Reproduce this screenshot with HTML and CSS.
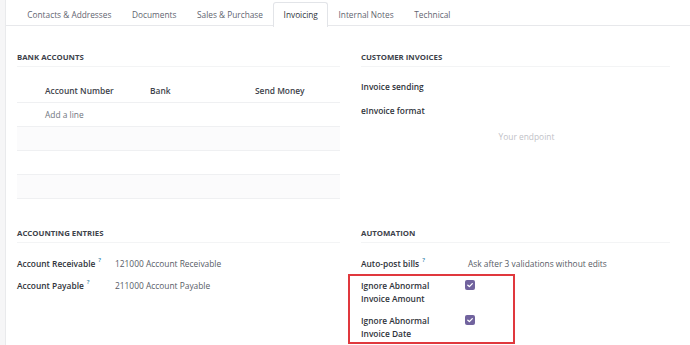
FILE: index.html
```html
<!DOCTYPE html>
<html lang="en">
<head>
  <meta charset="UTF-8">
  <meta name="viewport" content="width=device-width, initial-scale=1.0">
  <title>Partner - Invoicing</title>
  <link rel="stylesheet" href="styles.css">
</head>
<body>

<div class="page">
  <div class="rail"></div>

  <div class="sheet">
    <ul class="tabs">
      <li class="tab">Contacts &amp; Addresses</li>
      <li class="tab">Documents</li>
      <li class="tab">Sales &amp; Purchase</li>
      <li class="tab active">Invoicing</li>
      <li class="tab">Internal Notes</li>
      <li class="tab">Technical</li>
    </ul>

    <div class="groups">
      <!-- bank accounts -->
      <div class="group">
        <div class="group-title">Bank Accounts</div>
        <table class="lines">
          <thead>
            <tr>
              <th class="col-number">Account Number</th>
              <th class="col-bank">Bank</th>
              <th>Send Money</th>
            </tr>
          </thead>
          <tbody>
            <tr><td class="add-line" colspan="3">Add a line</td></tr>
            <tr class="stripe"><td colspan="3"></td></tr>
            <tr><td colspan="3"></td></tr>
            <tr class="stripe"><td colspan="3"></td></tr>
          </tbody>
        </table>
      </div>

      <!-- customer invoices -->
      <div class="group">
        <div class="group-title">Customer Invoices</div>
        <div class="field-row wide first">
          <div class="label">Invoice sending</div>
        </div>
        <div class="field-row wide">
          <div class="label">eInvoice format</div>
        </div>
        <div class="endpoint">Your endpoint</div>
      </div>

      <!-- accounting entries -->
      <div class="group second">
        <div class="group-title">Accounting Entries</div>
        <div class="field-row">
          <div class="label left-label">Account Receivable<sup>?</sup></div>
          <div class="value">121000 Account Receivable</div>
        </div>
        <div class="field-row">
          <div class="label left-label">Account Payable<sup>?</sup></div>
          <div class="value">211000 Account Payable</div>
        </div>
      </div>

      <!-- automation -->
      <div class="group second">
        <div class="group-title">Automation</div>
        <div class="field-row">
          <div class="label right-label">Auto-post bills<sup>?</sup></div>
          <div class="value">Ask after 3 validations without edits</div>
        </div>
        <div class="highlight">
          <div class="field-row">
            <div class="label right-label">Ignore Abnormal<br>Invoice Amount</div>
            <div class="value"><span class="checkbox"><svg viewBox="0 0 10 10" width="10" height="10"><path d="M2.8 5.2 L4.4 6.6 L7.3 3.6" fill="none" stroke="#fff" stroke-width="1.3" stroke-linecap="round" stroke-linejoin="round"/></svg></span></div>
          </div>
          <div class="field-row">
            <div class="label right-label">Ignore Abnormal<br>Invoice Date</div>
            <div class="value"><span class="checkbox"><svg viewBox="0 0 10 10" width="10" height="10"><path d="M2.8 5.2 L4.4 6.6 L7.3 3.6" fill="none" stroke="#fff" stroke-width="1.3" stroke-linecap="round" stroke-linejoin="round"/></svg></span></div>
          </div>
        </div>
      </div>
    </div>
  </div>
</div>

</body>
</html>
```

FILE: styles.css
```css
body {
  margin: 0;
  font-family: "Open Sans", "Noto Sans", sans-serif;
  font-size: 8.4px;
  color: #4a4f59;
  background-color: #fff;
}
.page {
  display: flex;
  height: 345px;
  overflow: hidden;
}
.rail {
  width: 5px;
  flex: none;
  background-color: #f6f6f7;
  border-right: 1px solid #e9eaec;
}
.sheet {
  flex: 1;
}

/* notebook tabs */
.tabs {
  list-style: none;
  margin: 0;
  padding: 2px 0 0 11px;
  display: flex;
  height: 23px;
  border-bottom: 1px solid #e7e8eb;
}
.tab {
  padding: 0 9.3px;
  line-height: 23px;
  font-size: 8.3px;
  color: #5f6570;
  border: 1px solid transparent;
  border-bottom: none;
}
.tab.active {
  color: #30343b;
  background-color: #fff;
  border-color: #e2e4e8;
  border-radius: 3px 3px 0 0;
  height: 24px;
}

/* form groups */
.groups {
  display: grid;
  grid-template-columns: 323px 309px;
  column-gap: 21px;
  padding: 0 11px;
}
.group-title {
  margin-top: 25px;
  line-height: 12px;
  padding-bottom: 3px;
  border-bottom: 1px solid #f3f4f5;
  font-weight: 700;
  font-size: 7.8px;
  text-transform: uppercase;
  color: #3d424a;
}
.group.second .group-title {
  margin-top: 28px;
  margin-bottom: 9px;
}

.lines {
  width: 100%;
  margin-top: 12px;
  border-collapse: collapse;
}
.lines th,
.lines td {
  height: 23px;
  padding: 0;
  border-bottom: 1px solid #eff0f2;
  text-align: left;
}
.lines th {
  font-weight: 600;
  color: #3d424a;
}
.lines th.col-number {
  padding-left: 28px;
  width: 105px;
}
.lines th.col-bank {
  width: 105px;
}
.lines td.add-line {
  padding-left: 28px;
  color: #70757e;
}
.lines tr.stripe td {
  background-color: #fbfbfc;
}

.field-row {
  display: flex;
  padding: 5px 0 4px;
  line-height: 13px;
}
.field-row.wide {
  padding: 5.5px 0;
}
.field-row.first {
  margin-top: 7px;
}
.label {
  font-weight: 600;
  color: #2f333a;
}
.left-label {
  width: 98px;
  flex: none;
}
.right-label {
  width: 107px;
  flex: none;
}
.label sup {
  font-size: 6px;
  color: #2a7fa8;
  margin-left: 3px;
  vertical-align: 5px;
  line-height: 0;
}
.value {
  color: #575c66;
}
.endpoint {
  text-align: center;
  color: #bfc2c7;
  line-height: 13px;
  padding: 8px 0 0 22px;
}

.checkbox {
  display: inline-flex;
  width: 10px;
  height: 10px;
  margin-top: 1px;
  margin-left: -3px;
  border-radius: 2px;
  background-color: #71639e;
}

/* annotation around the two ignore settings */
.highlight {
  position: relative;
}
.highlight::after {
  content: "";
  position: absolute;
  left: -13px;
  top: 0;
  width: 163px;
  bottom: 0;
  border: 2px solid #e0383d;
}
```
